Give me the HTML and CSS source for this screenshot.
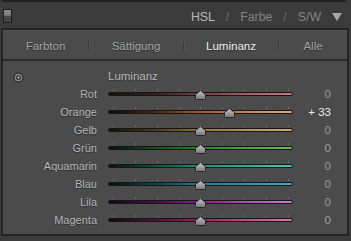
FILE: index.html
```html
<!DOCTYPE html>
<html lang="de">
<head>
<meta charset="utf-8">
<title>HSL Luminanz</title>
<link rel="stylesheet" href="styles.css">
</head>
<body>
<svg class="defs" width="0" height="0" aria-hidden="true">
  <defs>
    <linearGradient id="thumbGrad" x1="0" y1="0" x2="0" y2="1">
      <stop offset="0" stop-color="#c4c4c4"/>
      <stop offset="0.55" stop-color="#9c9c9c"/>
      <stop offset="1" stop-color="#767676"/>
    </linearGradient>
  </defs>
</svg>
<div class="prev"></div>
<header class="hdr">
  <span class="switch"></span>
  <nav class="modes">
    <span class="mode on">HSL</span><span class="sl">/</span><span class="mode">Farbe</span><span class="sl">/</span><span class="mode">S/W</span>
  </nav>
  <svg class="tri" width="10" height="8" viewBox="0 0 10 8"><path d="M0 0 H10 L5 8 Z" fill="#a6a6a6"/></svg>
</header>
<section class="panel">
  <div class="tabs">
    <span class="tab t1">Farbton</span><i class="sep"></i><span class="tab t2">Sättigung</span><i class="sep"></i><span class="tab t3 on">Luminanz</span><i class="sep"></i><span class="tab t4">Alle</span>
  </div>
  <div class="content">
    <div class="row head">
      <span class="lbl target"><svg width="11" height="11" viewBox="0 0 11 11"><circle cx="5.5" cy="5.5" r="5" fill="#2c2c2c"/><circle cx="5.5" cy="5.5" r="3.8" fill="#8e8e8e"/><circle cx="5.5" cy="5.5" r="2.6" fill="#3a3a3a"/><circle cx="5.5" cy="5.5" r="1.2" fill="#a0a0a0"/></svg></span>
      <span class="title">Luminanz</span>
    </div>
    <div class="row"><span class="lbl">Rot</span><div class="slider rot" style="--v:0"><span class="ticks"></span><span class="track"></span><svg class="thumb" width="11" height="10" viewBox="0 0 11 10"><path d="M5.5 0.5 L10.5 4.5 V8.5 Q10.5 9.5 9.5 9.5 H1.5 Q0.5 9.5 0.5 8.5 V4.5 Z" fill="url(#thumbGrad)" stroke="#262626"/></svg></div><span class="val">0</span></div>
    <div class="row"><span class="lbl">Orange</span><div class="slider orange" style="--v:33"><span class="ticks"></span><span class="track"></span><svg class="thumb" width="11" height="10" viewBox="0 0 11 10"><path d="M5.5 0.5 L10.5 4.5 V8.5 Q10.5 9.5 9.5 9.5 H1.5 Q0.5 9.5 0.5 8.5 V4.5 Z" fill="url(#thumbGrad)" stroke="#262626"/></svg></div><span class="val hi">+ 33</span></div>
    <div class="row"><span class="lbl">Gelb</span><div class="slider gelb" style="--v:0"><span class="ticks"></span><span class="track"></span><svg class="thumb" width="11" height="10" viewBox="0 0 11 10"><path d="M5.5 0.5 L10.5 4.5 V8.5 Q10.5 9.5 9.5 9.5 H1.5 Q0.5 9.5 0.5 8.5 V4.5 Z" fill="url(#thumbGrad)" stroke="#262626"/></svg></div><span class="val">0</span></div>
    <div class="row"><span class="lbl">Grün</span><div class="slider gruen" style="--v:0"><span class="ticks"></span><span class="track"></span><svg class="thumb" width="11" height="10" viewBox="0 0 11 10"><path d="M5.5 0.5 L10.5 4.5 V8.5 Q10.5 9.5 9.5 9.5 H1.5 Q0.5 9.5 0.5 8.5 V4.5 Z" fill="url(#thumbGrad)" stroke="#262626"/></svg></div><span class="val">0</span></div>
    <div class="row"><span class="lbl">Aquamarin</span><div class="slider aqua" style="--v:0"><span class="ticks"></span><span class="track"></span><svg class="thumb" width="11" height="10" viewBox="0 0 11 10"><path d="M5.5 0.5 L10.5 4.5 V8.5 Q10.5 9.5 9.5 9.5 H1.5 Q0.5 9.5 0.5 8.5 V4.5 Z" fill="url(#thumbGrad)" stroke="#262626"/></svg></div><span class="val">0</span></div>
    <div class="row"><span class="lbl">Blau</span><div class="slider blau" style="--v:0"><span class="ticks"></span><span class="track"></span><svg class="thumb" width="11" height="10" viewBox="0 0 11 10"><path d="M5.5 0.5 L10.5 4.5 V8.5 Q10.5 9.5 9.5 9.5 H1.5 Q0.5 9.5 0.5 8.5 V4.5 Z" fill="url(#thumbGrad)" stroke="#262626"/></svg></div><span class="val">0</span></div>
    <div class="row"><span class="lbl">Lila</span><div class="slider lila" style="--v:0"><span class="ticks"></span><span class="track"></span><svg class="thumb" width="11" height="10" viewBox="0 0 11 10"><path d="M5.5 0.5 L10.5 4.5 V8.5 Q10.5 9.5 9.5 9.5 H1.5 Q0.5 9.5 0.5 8.5 V4.5 Z" fill="url(#thumbGrad)" stroke="#262626"/></svg></div><span class="val">0</span></div>
    <div class="row"><span class="lbl">Magenta</span><div class="slider magenta" style="--v:0"><span class="ticks"></span><span class="track"></span><svg class="thumb" width="11" height="10" viewBox="0 0 11 10"><path d="M5.5 0.5 L10.5 4.5 V8.5 Q10.5 9.5 9.5 9.5 H1.5 Q0.5 9.5 0.5 8.5 V4.5 Z" fill="url(#thumbGrad)" stroke="#262626"/></svg></div><span class="val">0</span></div>
  </div>
</section>
</body>
</html>
```
FILE: styles.css
```css
* { box-sizing: border-box; }
html, body { margin: 0; padding: 0; }
body {
  width: 351px;
  height: 241px;
  overflow: hidden;
  background: #3b3b3b;
  font-family: "Liberation Sans", Arial, sans-serif;
  color: #b4b4b4;
}
.defs { position: absolute; width: 0; height: 0; }

.prev {
  margin-left: 2px;
  width: 344px;
  height: 2px;
  background: #222;
}

.hdr {
  height: 26px;
  display: flex;
  align-items: center;
  padding: 0 9px 0 3px;
}
.switch {
  width: 9px;
  height: 14px;
  border: 1px solid #1c1c1c;
  background: linear-gradient(to bottom, #8e8e8e 0, #7a7a7a 45%, #4a4a4a 50%, #444 100%);
  margin-top: 1px;
}
.modes {
  margin-left: auto;
  display: flex;
  gap: 11px;
  font-size: 12.3px;
  color: #828282;
  margin-top: 4px;
  margin-right: 11px;
}
.modes .on { color: #b8b8b8; }
.modes .sl { color: #6c6c6c; }
.tri { margin-top: 3px; }

.panel {
  margin-left: 1px;
  width: 348px;
  height: 208px;
  border: 2px solid #242424;
  background: #4b4b4b;
}

.tabs {
  height: 31px;
  display: flex;
  align-items: center;
  border-bottom: 2px solid #2a2a2a;
  font-size: 11.5px;
  color: #a6a6a6;
  text-shadow: 0 1px 1px rgba(0,0,0,0.45);
  border-top: 1px solid #555;
}
.tab { text-align: center; padding-top: 1px; }
.t1 { width: 85px; }
.t2, .t3 { width: 94px; }
.t4 { flex: 1; }
.tab.on { color: #f2f2f2; }
.sep {
  width: 1px;
  height: 10px;
  background: #3a3a3a;
  box-shadow: 1px 0 0 #555;
  margin-top: 2px;
}

.content {
  padding-top: 6px;
}
.row {
  height: 18px;
  display: flex;
  align-items: center;
}
.lbl {
  width: 94px;
  text-align: right;
  font-size: 11px;
  color: #b6b6b6;
  text-shadow: 0 1px 1px rgba(0,0,0,0.45);
  margin-right: 11px;
}
.target {
  text-align: left;
  padding-left: 10px;
  height: 18px;
  padding-top: 5px;
}
.target svg { display: block; }
.title {
  font-size: 11.5px;
  color: #b8b8b8;
  text-shadow: 0 1px 1px rgba(0,0,0,0.4);
  margin-top: -1px;
}

.slider {
  position: relative;
  width: 185px;
  height: 18px;
}
.ticks {
  position: absolute;
  left: 5px;
  top: 4px;
  width: 176px;
  height: 2px;
  background: repeating-linear-gradient(to right, #6e6e6e 0 1px, transparent 1px 21.875px);
}
.track {
  position: absolute;
  left: 0;
  top: 7px;
  width: 185px;
  height: 4px;
  border: 1px solid #161616;
  border-radius: 2px;
}
.thumb {
  position: absolute;
  top: 5px;
  left: calc(87px + var(--v) * 0.875px);
}

.rot .track     { background: linear-gradient(to right, #141010 0%, #3a1e1e 25%, #7a3c3c 50%, #a45e5e 75%, #c27c7c 100%); }
.orange .track  { background: linear-gradient(to right, #140e08 0%, #4a2610 25%, #a65a26 50%, #cc8658 75%, #e2a482 100%); }
.gelb .track    { background: linear-gradient(to right, #12100a 0%, #4a3a18 25%, #94723a 50%, #b49258 75%, #cbaa72 100%); }
.gruen .track   { background: linear-gradient(to right, #0a120a 0%, #14501a 25%, #228a22 50%, #4ca040 75%, #78b460 100%); }
.aqua .track    { background: linear-gradient(to right, #081212 0%, #0e4e48 25%, #129484 50%, #2ab0a0 75%, #48c4b4 100%); }
.blau .track    { background: linear-gradient(to right, #081014 0%, #0c4450 25%, #14808e 50%, #2c98a8 75%, #48acba 100%); }
.lila .track    { background: linear-gradient(to right, #120812 0%, #4a0e4a 25%, #8a1a8a 50%, #b04eb0 75%, #c87ec6 100%); }
.magenta .track { background: linear-gradient(to right, #12080e 0%, #52103a 25%, #a21868 50%, #c0488e 75%, #d67aaa 100%); }

.val {
  width: 38px;
  text-align: right;
  font-size: 11.5px;
  color: #9c9c9c;
}
.val.hi { color: #ececec; }
```
